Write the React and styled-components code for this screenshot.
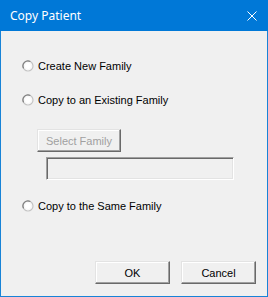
import React from 'react';
import styled, { createGlobalStyle } from 'styled-components';

const GlobalStyle = createGlobalStyle`
  html, body {
    margin: 0;
    padding: 0;
    background: #f0f0f0;
  }
  * {
    box-sizing: border-box;
  }
`;

const Window = styled.div`
  width: 268px;
  height: 297px;
  display: flex;
  flex-direction: column;
  background: #f0f0f0;
  border: 1px solid #1883d7;
  border-top: none;
  font-family: "Liberation Sans", Arial, sans-serif;
  font-size: 11px;
  color: #000;
`;

const TitleBar = styled.div`
  height: 31px;
  margin: 0 -1px;
  background: #0078d7;
  display: flex;
  align-items: center;
  justify-content: space-between;
  padding: 0 11px 0 10px;
  color: #fff;
  font-family: "Noto Sans", "Open Sans", sans-serif;
  font-size: 12px;
`;

const CloseButton = styled.div`
  width: 10px;
  height: 10px;
  margin-top: 1px;
  display: flex;
`;

const Body = styled.div`
  flex: 1;
  display: flex;
  flex-direction: column;
  padding: 29px 11px 12px 21px;
`;

const RadioRow = styled.label`
  display: flex;
  align-items: center;
  height: 12px;
  gap: 4px;
  margin-top: ${(p) => p.$top || 0}px;
  white-space: nowrap;
`;

const Group = styled.div`
  display: flex;
  flex-direction: column;
  align-items: flex-start;
  padding-left: 15px;
  margin-top: 23px;
`;

const Button = styled.button`
  width: ${(p) => p.$width || 75}px;
  height: ${(p) => p.$height || 23}px;
  padding: 0;
  background: #f0f0f0;
  border-top: 1px solid #e3e3e3;
  border-left: 1px solid #e3e3e3;
  border-right: 1px solid #696969;
  border-bottom: 1px solid #696969;
  box-shadow: inset -1px -1px #a0a0a0, inset 1px 1px #ffffff;
  font-family: "Liberation Sans", Arial, sans-serif;
  font-size: 11px;
  color: ${(p) => (p.disabled ? '#a0a0a0' : '#000')};
`;

const TextBox = styled.div`
  width: 188px;
  height: 23px;
  margin-top: 5px;
  margin-left: 9px;
  background: #f0f0f0;
  border-top: 1px solid #a0a0a0;
  border-left: 1px solid #a0a0a0;
  border-right: 1px solid #ffffff;
  border-bottom: 1px solid #ffffff;
  box-shadow: inset 1px 1px #696969, inset -1px -1px #e3e3e3;
`;

const Footer = styled.div`
  margin-top: auto;
  display: flex;
  justify-content: flex-end;
  gap: 11px;
`;

const Radio = () => (
  <svg width="12" height="12" viewBox="0 0 12 12">
    <circle cx="6" cy="6" r="5" fill="#ffffff" stroke="#c4c4c4" strokeWidth="1.2" />
    <path d="M1.6 8.4 A5 5 0 0 1 8.4 1.6" fill="none" stroke="#808080" strokeWidth="1.2" />
    <circle cx="6" cy="6" r="3.6" fill="none" stroke="#f4f4f4" strokeWidth="0.8" />
  </svg>
);

const CloseIcon = () => (
  <svg width="10" height="10" viewBox="0 0 10 10">
    <path d="M0.5 0.5 L9.5 9.5 M9.5 0.5 L0.5 9.5" stroke="#fff" strokeWidth="1" />
  </svg>
);

export default function App() {
  return (
    <>
      <GlobalStyle />
      <Window>
        <TitleBar>
          <span>Copy Patient</span>
          <CloseButton>
            <CloseIcon />
          </CloseButton>
        </TitleBar>
        <Body>
          <RadioRow>
            <Radio />
            <span>Create New Family</span>
          </RadioRow>
          <RadioRow $top={22}>
            <Radio />
            <span>Copy to an Existing Family</span>
          </RadioRow>
          <Group>
            <Button $width={84} disabled>Select Family</Button>
            <TextBox />
          </Group>
          <RadioRow $top={20}>
            <Radio />
            <span>Copy to the Same Family</span>
          </RadioRow>
          <Footer>
            <Button>OK</Button>
            <Button>Cancel</Button>
          </Footer>
        </Body>
      </Window>
    </>
  );
}
